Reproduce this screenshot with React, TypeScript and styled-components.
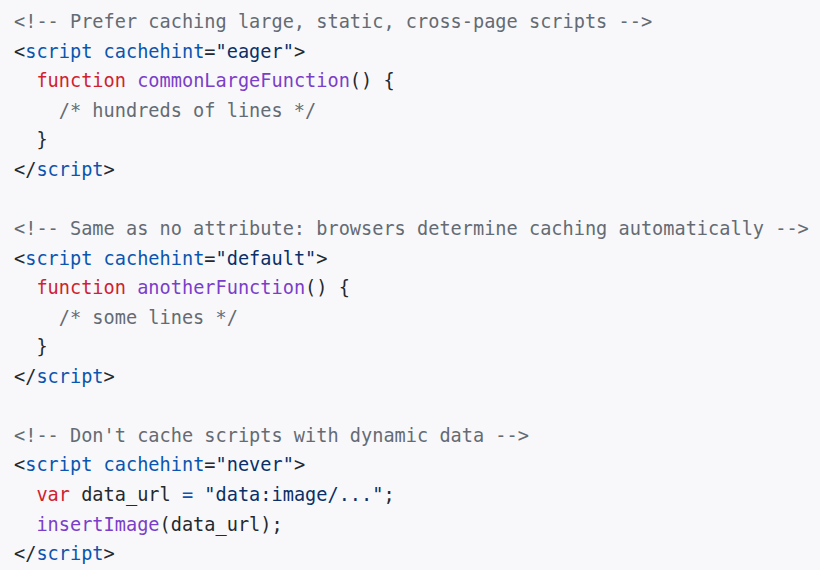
import React from "react";
import styled, { createGlobalStyle } from "styled-components";

const Global = createGlobalStyle`
  html, body { margin: 0; padding: 0; background: #f8f8fa; }
`;

const Pre = styled.pre`
  margin: 0;
  padding: 7px 0 0 14px;
  width: 820px;
  height: 570px;
  box-sizing: border-box;
  background: #f8f8fa;
  font-family: "DejaVu Sans Mono", "Liberation Mono", monospace;
  font-size: 18.6px;
  line-height: 29.56px;
  color: #24292f;
  overflow: hidden;
`;

type Kind = "c" | "t" | "a" | "s" | "k" | "f" | "p" | "o";
const colors: Record<Kind, string> = {
  c: "#646b73",
  t: "#0a55b0",
  a: "#0a55b0",
  s: "#0b2f66",
  k: "#cf222e",
  f: "#7a3ec9",
  p: "#24292f",
  o: "#0a55b0",
};

const Tok = styled.span<{ $k: Kind }>`
  color: ${(p) => colors[p.$k]};
`;

type Line = [Kind, string][];

const lines: Line[] = [
  [["c", "<!-- Prefer caching large, static, cross-page scripts -->"]],
  [["p", "<"], ["t", "script"], ["p", " "], ["a", "cachehint"], ["p", "="], ["s", '"eager"'], ["p", ">"]],
  [["p", "  "], ["k", "function"], ["p", " "], ["f", "commonLargeFunction"], ["p", "() {"]],
  [["c", "    /* hundreds of lines */"]],
  [["p", "  }"]],
  [["p", "</"], ["t", "script"], ["p", ">"]],
  [],
  [["c", "<!-- Same as no attribute: browsers determine caching automatically -->"]],
  [["p", "<"], ["t", "script"], ["p", " "], ["a", "cachehint"], ["p", "="], ["s", '"default"'], ["p", ">"]],
  [["p", "  "], ["k", "function"], ["p", " "], ["f", "anotherFunction"], ["p", "() {"]],
  [["c", "    /* some lines */"]],
  [["p", "  }"]],
  [["p", "</"], ["t", "script"], ["p", ">"]],
  [],
  [["c", "<!-- Don't cache scripts with dynamic data -->"]],
  [["p", "<"], ["t", "script"], ["p", " "], ["a", "cachehint"], ["p", "="], ["s", '"never"'], ["p", ">"]],
  [["p", "  "], ["k", "var"], ["p", " data_url "], ["o", "="], ["p", " "], ["s", '"data:image/..."'], ["p", ";"]],
  [["p", "  "], ["f", "insertImage"], ["p", "(data_url);"]],
  [["p", "</"], ["t", "script"], ["p", ">"]],
];

export default function App() {
  return (
    <>
      <Global />
      <Pre>
        {lines.map((line, i) => (
          <React.Fragment key={i}>
            {line.map(([k, t], j) => (
              <Tok key={j} $k={k}>
                {t}
              </Tok>
            ))}
            {"\n"}
          </React.Fragment>
        ))}
      </Pre>
    </>
  );
}
